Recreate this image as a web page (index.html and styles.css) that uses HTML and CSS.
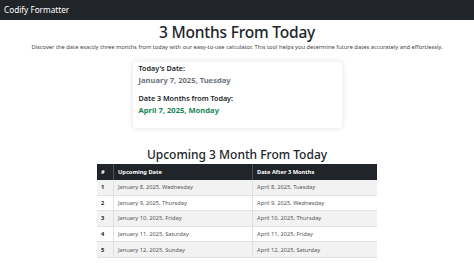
FILE: index.html
```html
<!DOCTYPE html>
<html>
	<head>
		<meta charset="utf-8">
		<meta name="viewport" content="width=device-width, initial-scale=1">
		<title>3 Months From Today</title>
		<link rel="stylesheet" href="styles.css">
	</head>
	<body>
		<nav class="navbar">Codify Formatter</nav>
		<div class="main">
			<h1>3 Months From Today</h1>
			<p class="intro">Discover the date exactly three months from today with our easy-to-use calculator. This tool helps you determine future dates accurately and effortlessly.</p>
			<div class="card">
				<div class="label">Today's Date:</div>
				<div class="value">January 7, 2025, Tuesday</div>
				<div class="label">Date 3 Months from Today:</div>
				<div class="value green">April 7, 2025, Monday</div>
			</div>
			<h2>Upcoming 3 Month From Today</h2>
			<table class="dates">
				<thead>
					<tr><th class="num">#</th><th>Upcoming Date</th><th>Date After 3 Months</th></tr>
				</thead>
				<tbody>
					<tr><td class="num">1</td><td>January 8, 2025, Wednesday</td><td>April 8, 2025, Tuesday</td></tr>
					<tr><td class="num">2</td><td>January 9, 2025, Thursday</td><td>April 9, 2025, Wednesday</td></tr>
					<tr><td class="num">3</td><td>January 10, 2025, Friday</td><td>April 10, 2025, Thursday</td></tr>
					<tr><td class="num">4</td><td>January 11, 2025, Saturday</td><td>April 11, 2025, Friday</td></tr>
					<tr><td class="num">5</td><td>January 12, 2025, Sunday</td><td>April 12, 2025, Saturday</td></tr>
				</tbody>
			</table>
		</div>
	</body>
</html>
```
FILE: styles.css
```css
body{
	margin: 0;
	font-family: "Noto Sans", "Open Sans", sans-serif;
	color: #212529;
	background: #fff;
}
.navbar{
	background: #212529;
	color: #fff;
	height: 20px;
	line-height: 20px;
	padding-left: 4px;
	font-size: 8.2px;
}
.main{
	display: flex;
	flex-direction: column;
	align-items: center;
}
h1{
	margin: 2px 0 0;
	font-size: 15.5px;
	font-weight: 500;
	line-height: 20px;
	letter-spacing: -0.2px;
}
.intro{
	margin: 1px 0 0;
	font-size: 5.75px;
	color: #444;
	line-height: 9px;
}
.card{
	width: 197px;
	margin-top: 10px;
	padding: 1px 6px 12px;
	box-shadow: 0 0 6px rgba(0,0,0,0.12);
	border-radius: 3px;
}
.label{
	font-size: 7.2px;
	font-weight: 600;
	line-height: 10px;
}
.label + .value + .label{
	margin-top: 7px;
}
.value{
	font-size: 7.6px;
	font-weight: 700;
	color: #6c757d;
	line-height: 11px;
	margin-top: 2px;
}
.value.green{
	color: #198754;
}
h2{
	margin: 19px 0 0;
	font-size: 12px;
	font-weight: 500;
	line-height: 16px;
}
.dates{
	width: 280px;
	margin-top: 1px;
	border-collapse: collapse;
	font-size: 5.7px;
}
.dates th, .dates td{
	height: 14.6px;
	padding: 0 4px;
	text-align: left;
	border-bottom: 1px solid #dee2e6;
}
.dates th{
	height: 16px;
	background: #212529;
	color: #fff;
	font-weight: 700;
	border-bottom: none;
	border-left: 1px solid #4d5154;
}
.dates td{
	color: #555;
	border-left: 1px solid #dee2e6;
}
.dates .num{
	width: 8px;
	font-weight: 700;
	color: #212529;
	border-left: none;
}
.dates th.num{
	color: #fff;
}
.dates tbody tr:nth-child(odd) td{
	background: #f2f2f2;
}
.dates th:nth-child(2), .dates td:nth-child(2){
	width: 130px;
}
```
